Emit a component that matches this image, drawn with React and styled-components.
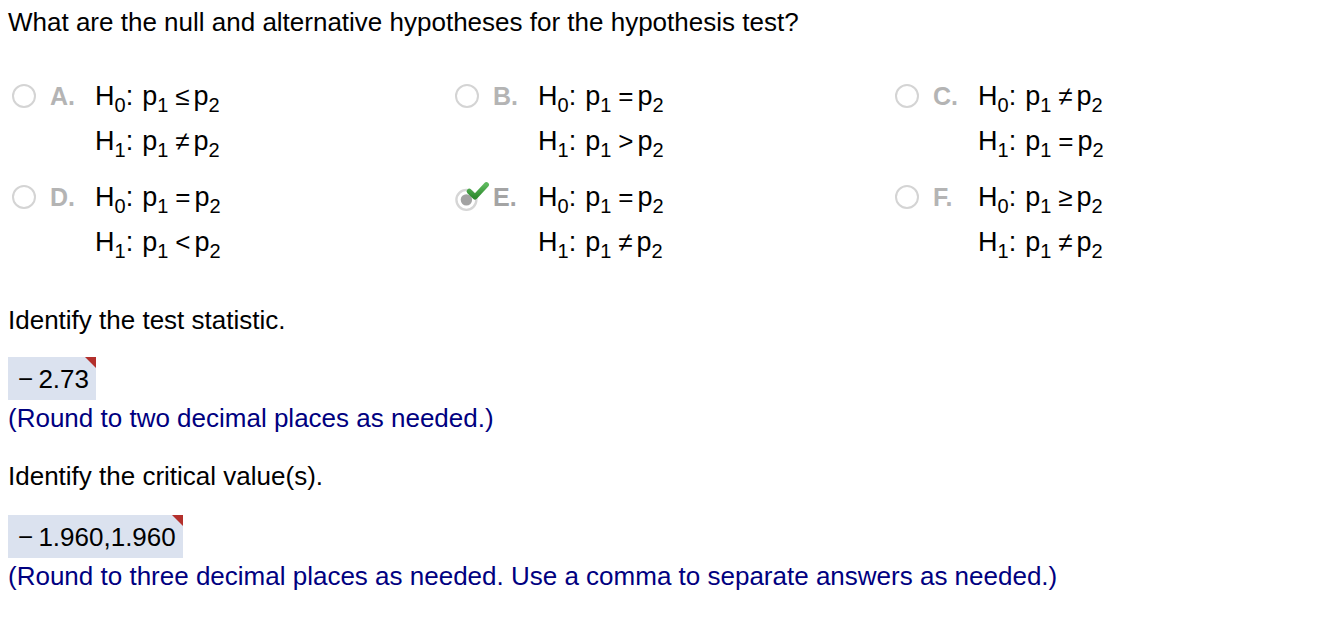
import styled, { createGlobalStyle } from "styled-components"

const GlobalStyle = createGlobalStyle`
    body {
        margin: 0;
        background: #ffffff;
        font-family: "Liberation Sans", Arial, sans-serif;
        color: #000000;
    }
`

const options = [
    { letter: "A", h0: "\u2264", h1: "\u2260" },
    { letter: "B", h0: "=", h1: ">" },
    { letter: "C", h0: "\u2260", h1: "=" },
    { letter: "D", h0: "=", h1: "<" },
    { letter: "E", h0: "=", h1: "\u2260", checked: true },
    { letter: "F", h0: "\u2265", h1: "\u2260" },
]

function Hyp({ n, op }) {
    return (
        <MathLine>
            H<Sub>{n}</Sub>:<Gap />p<Sub>1</Sub>
            <Op>{op}</Op>p<Sub>2</Sub>
        </MathLine>
    )
}

function CheckedRadio() {
    return (
        <svg width="40" height="34" viewBox="0 0 40 34">
            <defs>
                <linearGradient id="chk" x1="0" y1="0" x2="0" y2="1">
                    <stop offset="0" stopColor="#5cb85c" />
                    <stop offset="1" stopColor="#2f8a2f" />
                </linearGradient>
            </defs>
            <circle cx="12" cy="20" r="10.5" fill="none" stroke="#d6d6d6" strokeWidth="2.5" />
            <circle cx="12" cy="20" r="6" fill="#a2a2a2" />
            <path d="M15 11 L21 17 L33 4" fill="none" stroke="url(#chk)" strokeWidth="5.5" strokeLinecap="round" strokeLinejoin="round" />
        </svg>
    )
}

export default function App() {
    return (
        <>
            <GlobalStyle />
            <Page>
                <Question>What are the null and alternative hypotheses for the hypothesis test?</Question>
                <Options>
                    {options.map((o) => (
                        <Option key={o.letter}>
                            <RadioSlot>
                                {o.checked ? <CheckedRadio /> : <Radio />}
                            </RadioSlot>
                            <Letter checked={o.checked}>{o.letter}.</Letter>
                            <MathBlock>
                                <Hyp n="0" op={o.h0} />
                                <Hyp n="1" op={o.h1} />
                            </MathBlock>
                        </Option>
                    ))}
                </Options>

                <Prompt>Identify the test statistic.</Prompt>
                <AnswerBox>&minus;&thinsp;2.73</AnswerBox>
                <Note>(Round to two decimal places as needed.)</Note>

                <Prompt spaced>Identify the critical value(s).</Prompt>
                <AnswerBox wide>&minus;&thinsp;1.960,1.960</AnswerBox>
                <Note>(Round to three decimal places as needed. Use a comma to separate answers as needed.)</Note>
            </Page>
        </>
    )
}

const Page = styled.div`
    padding: 9px 8px;
    font-size: 26px;
`

const Question = styled.div`
    line-height: 26px;
`

const Options = styled.div`
    display: grid;
    grid-template-columns: 443px 440px 440px;
    row-gap: 24px;
    margin-top: 45px;
    padding-left: 4px;
`

const Option = styled.div`
    display: flex;
    align-items: flex-start;
`

const RadioSlot = styled.div`
    width: 38px;
    height: 32px;
    display: flex;
    align-items: center;
    position: relative;
`

const Radio = styled.div`
    width: 20px;
    height: 20px;
    border-radius: 50%;
    border: 2.5px solid #d4d4d4;
`

const Letter = styled.div`
    width: 45px;
    font-weight: bold;
    font-size: 25px;
    color: ${(p) => (p.checked ? "#a4a4a4" : "#b4b4b4")};
    line-height: 32px;
`

const MathBlock = styled.div`
    display: flex;
    flex-direction: column;
    gap: 13px;
`

const MathLine = styled.div`
    font-size: 27px;
    line-height: 32px;
    white-space: nowrap;
`

const Sub = styled.span`
    font-size: 20px;
    position: relative;
    top: 7px;
    line-height: 0;
`

const Gap = styled.span`
    display: inline-block;
    width: 9px;
`

const Op = styled.span`
    font-size: 26px;
    margin: 0 4px 0 7px;
`

const Prompt = styled.div`
    line-height: 26px;
    margin-top: ${(p) => (p.spaced ? "32px" : "49px")};
`

const AnswerBox = styled.div`
    display: block;
    width: fit-content;
    position: relative;
    margin-top: ${(p) => (p.wide ? "26px" : "24px")};
    padding: 7px 7px 6px 10px;
    background: #dbe2ef;
    font-size: 26px;
    line-height: 30px;

    &::after {
        content: "";
        position: absolute;
        top: 0;
        right: 0;
        width: 0;
        height: 0;
        border-top: 11px solid #b3302c;
        border-left: 11px solid transparent;
    }
`

const Note = styled.div`
    color: #000080;
    line-height: 26px;
    margin-top: 5px;
`
